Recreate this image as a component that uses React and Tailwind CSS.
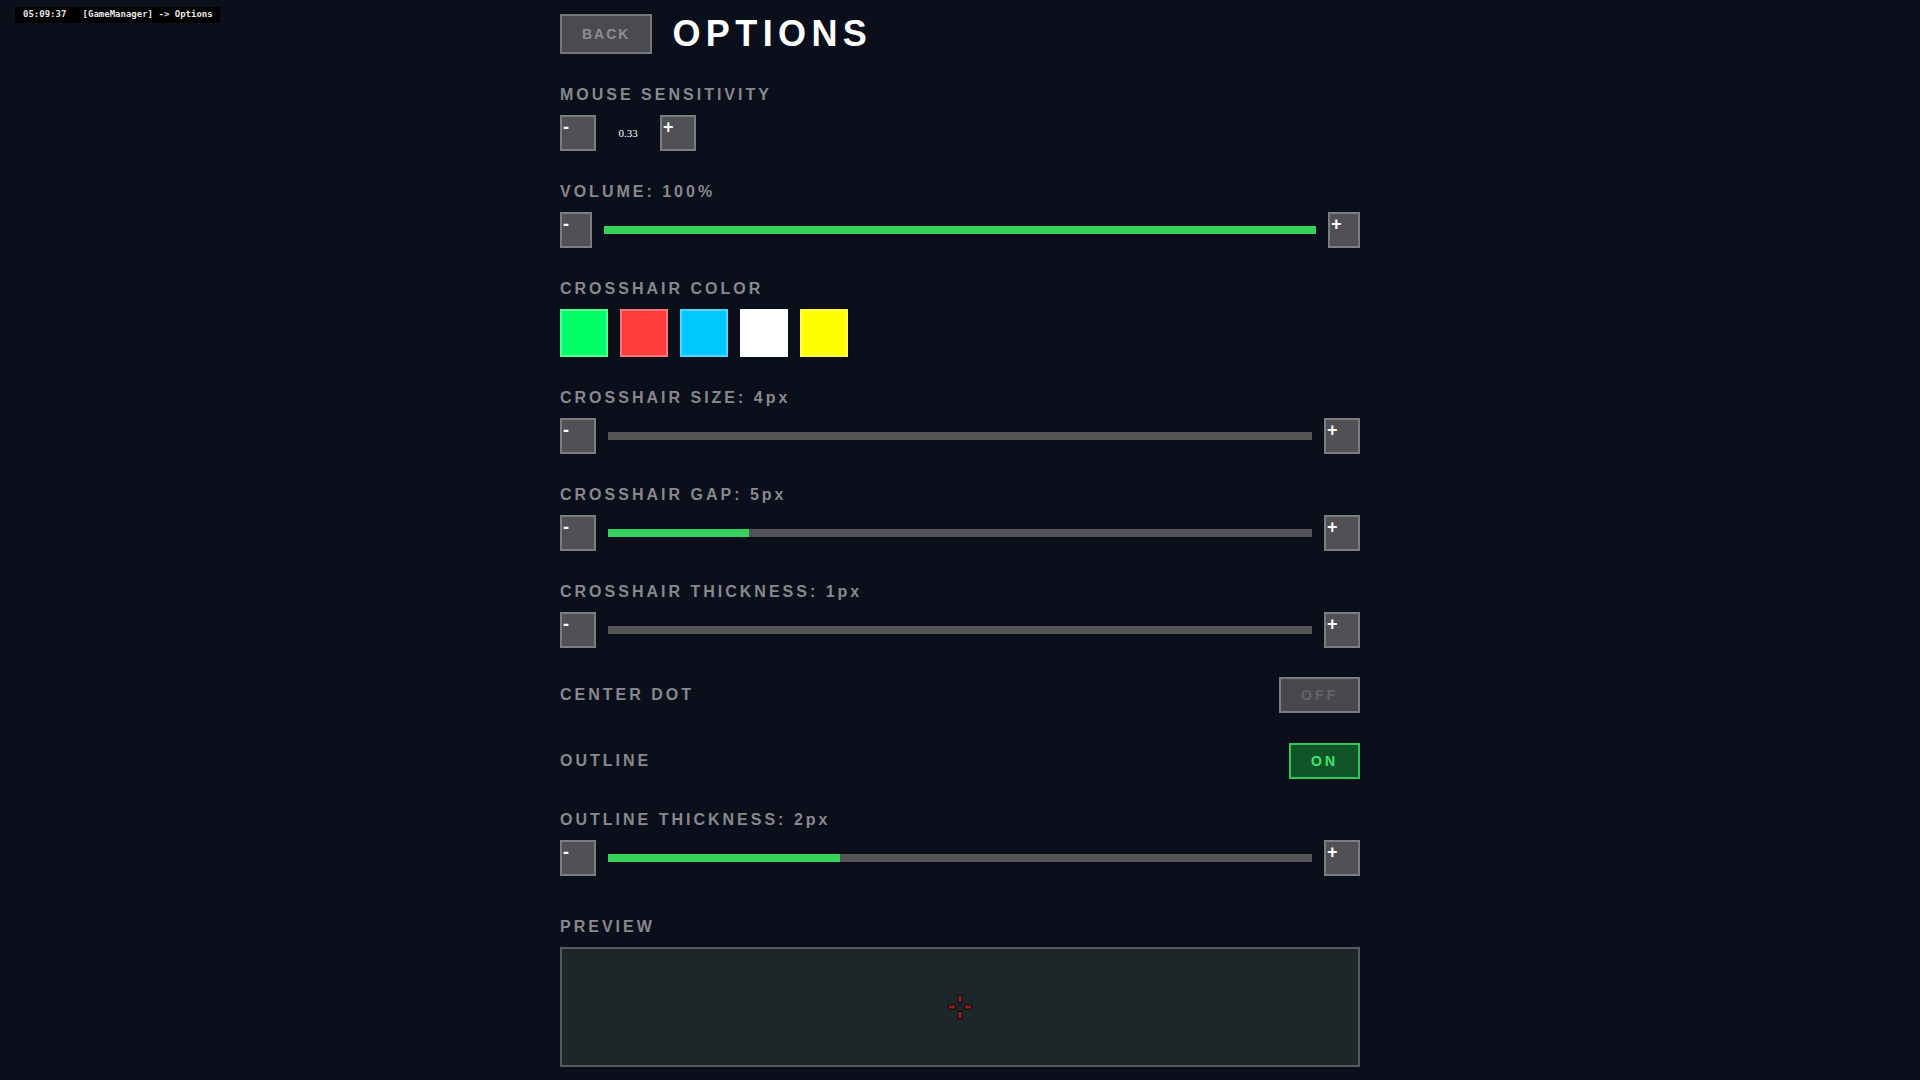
import React from "react";

const SANS = { fontFamily: '"Liberation Sans", Arial, sans-serif' };

function Btn({ children, wide = true }) {
  return (
    <button
      className={`${wide ? "w-9" : "w-8"} h-9 shrink-0 flex items-start justify-start bg-[#505055] border-2 border-[#7b7b80] text-white font-bold text-[18px] leading-[1.2] pl-px`}
      style={SANS}
    >
      {children}
    </button>
  );
}

function Label({ children }) {
  return (
    <div className="text-[16px] leading-6 font-bold tracking-[3px] text-[#88888d] mb-2" style={SANS}>
      {children}
    </div>
  );
}

function SliderRow({ pct }) {
  return (
    <div className="flex items-center gap-3">
      <Btn>-</Btn>
      <div className="flex-1 h-2 bg-[#555558]">
        <div className="h-full bg-[#33d35e]" style={{ width: `${pct}%` }} />
      </div>
      <Btn>+</Btn>
    </div>
  );
}

function Toggle({ on }) {
  return on ? (
    <button
      className="h-9 px-5 border-2 border-[#2fc65a] bg-[#0f5528] text-[#3de473] text-sm font-bold tracking-[3px]"
      style={SANS}
    >
      ON
    </button>
  ) : (
    <button
      className="h-9 px-5 border-2 border-[#7b7b80] bg-[#48484d] text-[#646469] text-sm font-bold tracking-[3px]"
      style={SANS}
    >
      OFF
    </button>
  );
}

export default function App() {
  const swatches = ["#00ff66", "#ff3b3b", "#00c8ff", "#ffffff", "#ffff00"];
  return (
    <div className="min-h-screen bg-[#0b0e1b] relative" style={SANS}>
      <div
        className="absolute top-[7px] left-[15px] h-4 pl-2 pr-[7px] flex items-center bg-black text-[#e6e6e6] text-[9px] font-bold whitespace-pre"
        style={{ fontFamily: '"DejaVu Sans Mono", monospace' }}
      >
        {"05:09:37   [GameManager] -> Options"}
      </div>

      <div className="w-[800px] mx-auto pt-[14px] pb-6 flex flex-col gap-[29px]">
        <div className="flex items-center gap-5">
          <button
            className="h-10 px-5 bg-[#4a4a50] border-2 border-[#77777c] text-[#8e8e93] text-sm font-bold tracking-[2px]"
            style={SANS}
          >
            BACK
          </button>
          <h1 className="text-[36px] leading-9 font-bold tracking-[0.15em] text-white" style={SANS}>
            OPTIONS
          </h1>
        </div>

        <div>
          <Label>MOUSE SENSITIVITY</Label>
          <div className="flex items-center">
            <Btn>-</Btn>
            <span
              className="w-16 text-center text-white text-[11px]"
              style={{ fontFamily: '"Liberation Serif", "Times New Roman", serif' }}
            >
              0.33
            </span>
            <Btn>+</Btn>
          </div>
        </div>

        <div>
          <Label>VOLUME: 100%</Label>
          <div className="flex items-center gap-3">
            <Btn wide={false}>-</Btn>
            <div className="flex-1 h-2 bg-[#33d35e]" />
            <Btn wide={false}>+</Btn>
          </div>
        </div>

        <div>
          <Label>CROSSHAIR COLOR</Label>
          <div className="flex gap-3">
            {swatches.map((c) => (
              <div key={c} className="w-12 h-12 border-2 border-white/30" style={{ backgroundColor: c }} />
            ))}
          </div>
        </div>

        <div>
          <Label>CROSSHAIR SIZE: 4px</Label>
          <SliderRow pct={0} />
        </div>

        <div>
          <Label>CROSSHAIR GAP: 5px</Label>
          <SliderRow pct={20} />
        </div>

        <div>
          <Label>CROSSHAIR THICKNESS: 1px</Label>
          <SliderRow pct={0} />
        </div>

        <div className="flex items-center justify-between">
          <div className="text-[16px] leading-6 font-bold tracking-[3px] text-[#88888d]">CENTER DOT</div>
          <Toggle on={false} />
        </div>

        <div className="flex items-center justify-between mt-px">
          <div className="text-[16px] leading-6 font-bold tracking-[3px] text-[#88888d]">OUTLINE</div>
          <Toggle on={true} />
        </div>

        <div>
          <Label>OUTLINE THICKNESS: 2px</Label>
          <SliderRow pct={33} />
        </div>

        <div className="mt-[10px]">
          <Label>PREVIEW</Label>
          <div className="h-[120px] border-2 border-[#58585c] bg-[#1d2729] flex items-center justify-center">
            <svg width="30" height="30" viewBox="0 0 30 30">
              <g fill="#0a0a0a">
                <rect x="3" y="12.5" width="8" height="5" />
                <rect x="19" y="12.5" width="8" height="5" />
                <rect x="12.5" y="3" width="5" height="8" />
                <rect x="12.5" y="19" width="5" height="8" />
              </g>
              <g fill="#9a1c21">
                <rect x="4" y="13.5" width="6" height="3" />
                <rect x="20" y="13.5" width="6" height="3" />
                <rect x="13.5" y="4" width="3" height="6" />
                <rect x="13.5" y="20" width="3" height="6" />
              </g>
            </svg>
          </div>
        </div>
      </div>
    </div>
  );
}
